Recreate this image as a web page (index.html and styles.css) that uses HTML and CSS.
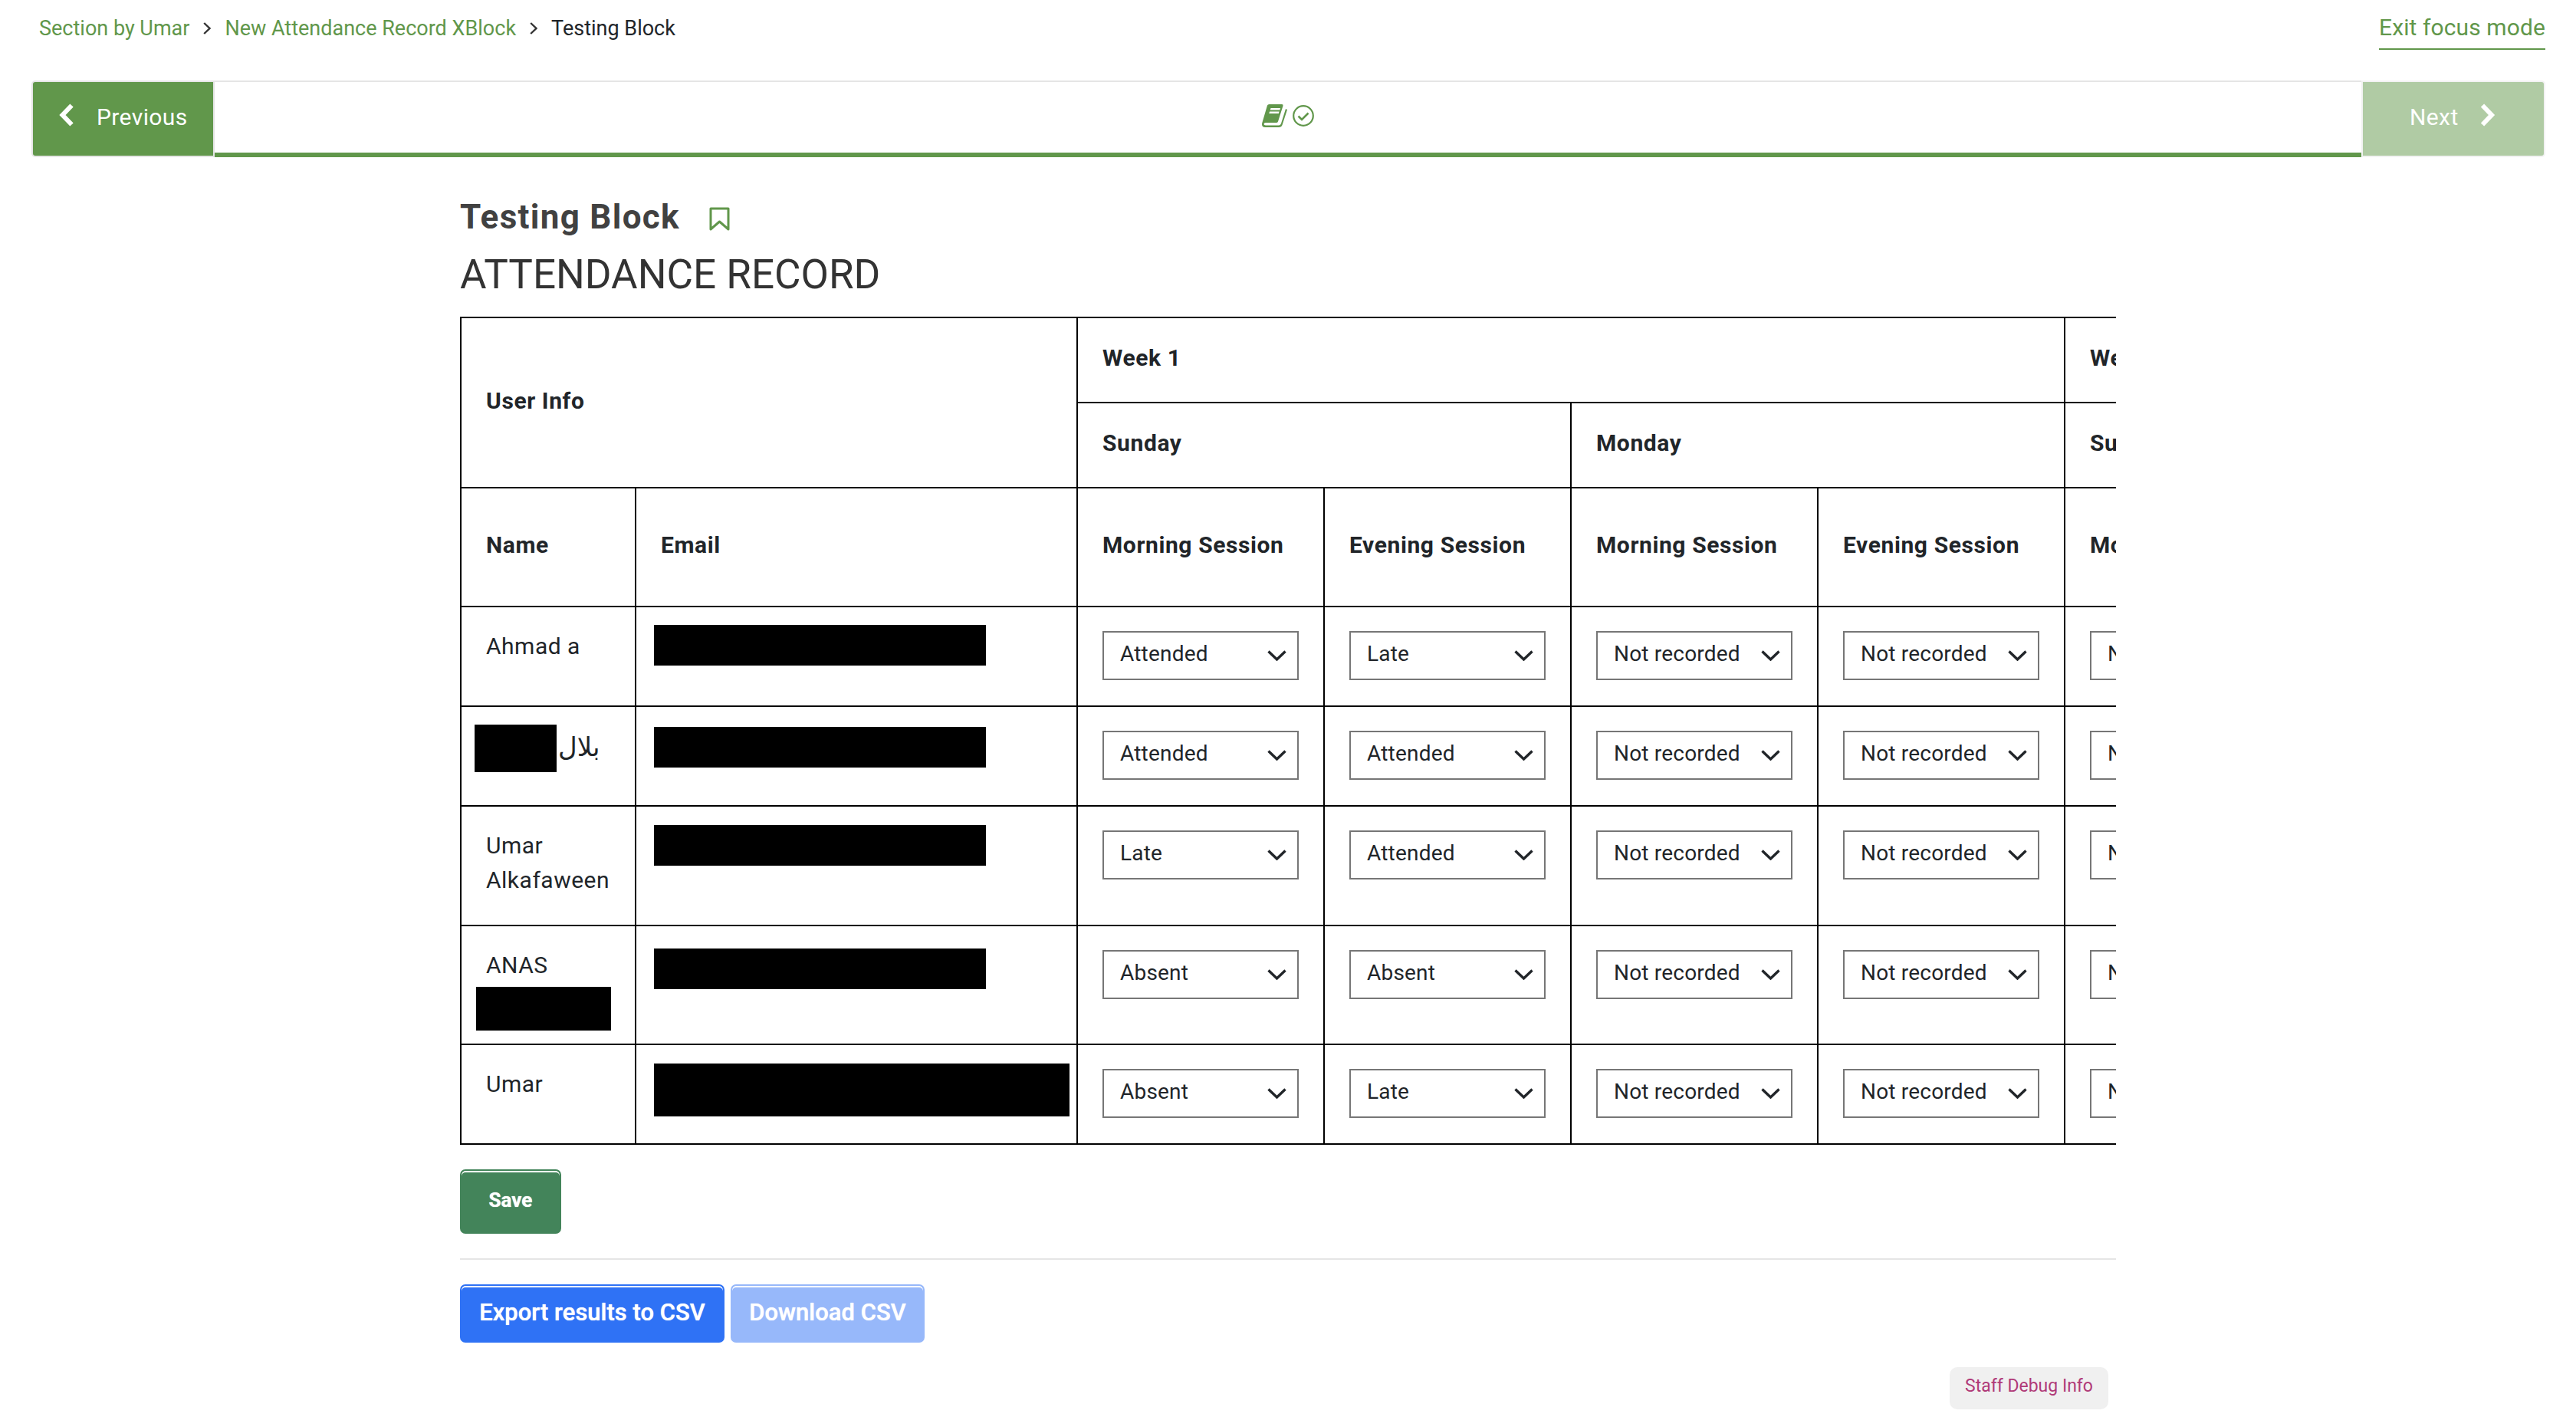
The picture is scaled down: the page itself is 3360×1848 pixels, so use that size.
FILE: index.html
```html
<!DOCTYPE html>
<html lang="en">
  <head>
    <meta charset="utf-8">
    <title>Testing Block</title>
    <link rel="stylesheet" href="styles.css">
  </head>
  <body>
    <svg class="sprite" width="0" height="0">
      <symbol id="caret" viewBox="0 0 25 14">
        <path d="M1.5 1.5 12.5 12 23.5 1.5" fill="none" stroke="#212529" stroke-width="3.4" />
      </symbol>
      <symbol id="crumb-sep" viewBox="0 0 10 16">
        <path d="M1.2 1 8.5 8 1.2 15" fill="none" stroke="#333" stroke-width="2.4" />
      </symbol>
    </svg>

    <header class="topbar">
      <nav class="crumbs">
        <a href="#">Section by Umar</a>
        <svg class="crumb-sep"><use href="#crumb-sep" /></svg>
        <a href="#">New Attendance Record XBlock</a>
        <svg class="crumb-sep"><use href="#crumb-sep" /></svg>
        <span>Testing Block</span>
      </nav>
      <a class="exit-focus" href="#">Exit focus mode</a>
    </header>

    <div class="seq-nav">
      <button class="seq-btn seq-prev">
        <svg class="seq-chevron" width="20" height="30" viewBox="0 0 20 30"><path d="M16.5 2.5 4.5 15l12 12.5" fill="none" stroke="#fff" stroke-width="6" /></svg>
        Previous
      </button>
      <div class="seq-track">
        <svg width="33" height="31" viewBox="0 0 33 31">
          <path fill="#61974b" d="M7 2.5Q7.5 1 9.5 1H26q2 0 1.5 2L21 23.5q-.5 1.5-2.5 1.5H5q-2.5 0-2.5 1.7 0 1.8 2.500 1.800h17q2 0 3-2.500L31 7l2 1-6.500 20q-1 3-4.500 3H4q-4 0-4-4 0-1 .5-2.500Z" />
          <path fill="#fff" d="M11.500 6H24l-.7 2.500H10.700ZM10 10.500h12.500l-.7 2.500H9.300Z" />
        </svg>
        <svg width="28" height="28" viewBox="0 0 28 28">
          <circle cx="14" cy="14" r="12.800" fill="none" stroke="#61974b" stroke-width="2.200" />
          <path d="M7.500 14.500 12 19l8.500-8.500" fill="none" stroke="#61974b" stroke-width="2.600" />
        </svg>
      </div>
      <button class="seq-btn seq-next">
        Next
        <svg class="seq-chevron" width="22" height="30" viewBox="0 0 22 30"><path d="M5 2.500 17 15 5 27.500" fill="none" stroke="#fff" stroke-width="6" /></svg>
      </button>
    </div>

    <main class="unit">
      <h2 class="unit-title">
        Testing Block
        <svg width="27" height="31" viewBox="0 0 27 31"><path d="M2 2h23v27L13.500 19 2 29Z" fill="none" stroke="#61974b" stroke-width="3" stroke-linejoin="round" /></svg>
      </h2>
      <h3 class="block-title">ATTENDANCE RECORD</h3>

      <div class="table-clip">
        <table class="attendance">
          <colgroup>
            <col class="col-name">
            <col class="col-email">
            <col class="col-session">
            <col class="col-session">
            <col class="col-session">
            <col class="col-session">
            <col class="col-session">
          </colgroup>
          <thead>
            <tr class="row-week">
              <th colspan="2" rowspan="2">User Info</th>
              <th colspan="4">Week 1</th>
              <th>Week 2</th>
            </tr>
            <tr class="row-day">
              <th colspan="2">Sunday</th>
              <th colspan="2">Monday</th>
              <th>Sunday</th>
            </tr>
            <tr class="row-session">
              <th>Name</th>
              <th>Email</th>
              <th>Morning Session</th>
              <th>Evening Session</th>
              <th>Morning Session</th>
              <th>Evening Session</th>
              <th>Morning Session</th>
            </tr>
          </thead>
          <tbody>
            <tr class="row-a">
              <td class="name">Ahmad a</td>
              <td class="email"><div class="mail mail-a"></div></td>
              <td><span class="picker"><select><option>Attended</option></select><svg><use href="#caret" /></svg></span></td>
              <td><span class="picker"><select><option>Late</option></select><svg><use href="#caret" /></svg></span></td>
              <td><span class="picker"><select><option>Not recorded</option></select><svg><use href="#caret" /></svg></span></td>
              <td><span class="picker"><select><option>Not recorded</option></select><svg><use href="#caret" /></svg></span></td>
              <td><span class="picker"><select><option>Not recorded</option></select><svg><use href="#caret" /></svg></span></td>
            </tr>
            <tr class="row-b">
              <td class="name"><div class="rtl-line"><div class="hide-short"></div><span class="rtl-text" dir="rtl">بلال</span></div></td>
              <td class="email"><div class="mail mail-b"></div></td>
              <td><span class="picker"><select><option>Attended</option></select><svg><use href="#caret" /></svg></span></td>
              <td><span class="picker"><select><option>Attended</option></select><svg><use href="#caret" /></svg></span></td>
              <td><span class="picker"><select><option>Not recorded</option></select><svg><use href="#caret" /></svg></span></td>
              <td><span class="picker"><select><option>Not recorded</option></select><svg><use href="#caret" /></svg></span></td>
              <td><span class="picker"><select><option>Not recorded</option></select><svg><use href="#caret" /></svg></span></td>
            </tr>
            <tr class="row-c">
              <td class="name">Umar Alkafaween</td>
              <td class="email"><div class="mail mail-c"></div></td>
              <td><span class="picker"><select><option>Late</option></select><svg><use href="#caret" /></svg></span></td>
              <td><span class="picker"><select><option>Attended</option></select><svg><use href="#caret" /></svg></span></td>
              <td><span class="picker"><select><option>Not recorded</option></select><svg><use href="#caret" /></svg></span></td>
              <td><span class="picker"><select><option>Not recorded</option></select><svg><use href="#caret" /></svg></span></td>
              <td><span class="picker"><select><option>Not recorded</option></select><svg><use href="#caret" /></svg></span></td>
            </tr>
            <tr class="row-d">
              <td class="name">ANAS<div class="hide-long"></div></td>
              <td class="email"><div class="mail mail-d"></div></td>
              <td><span class="picker"><select><option>Absent</option></select><svg><use href="#caret" /></svg></span></td>
              <td><span class="picker"><select><option>Absent</option></select><svg><use href="#caret" /></svg></span></td>
              <td><span class="picker"><select><option>Not recorded</option></select><svg><use href="#caret" /></svg></span></td>
              <td><span class="picker"><select><option>Not recorded</option></select><svg><use href="#caret" /></svg></span></td>
              <td><span class="picker"><select><option>Not recorded</option></select><svg><use href="#caret" /></svg></span></td>
            </tr>
            <tr class="row-e">
              <td class="name">Umar</td>
              <td class="email"><div class="mail mail-e"></div></td>
              <td><span class="picker"><select><option>Absent</option></select><svg><use href="#caret" /></svg></span></td>
              <td><span class="picker"><select><option>Late</option></select><svg><use href="#caret" /></svg></span></td>
              <td><span class="picker"><select><option>Not recorded</option></select><svg><use href="#caret" /></svg></span></td>
              <td><span class="picker"><select><option>Not recorded</option></select><svg><use href="#caret" /></svg></span></td>
              <td><span class="picker"><select><option>Not recorded</option></select><svg><use href="#caret" /></svg></span></td>
            </tr>
          </tbody>
        </table>
      </div>

      <button class="btn btn-save">Save</button>
      <hr class="rule">
      <div class="export-row">
        <button class="btn btn-export">Export results to CSV</button>
        <button class="btn btn-download">Download CSV</button>
      </div>
      <div class="debug-row">
        <a class="staff-debug" href="#">Staff Debug Info</a>
      </div>
    </main>
  </body>
</html>
```

FILE: styles.css
```css
* {
  box-sizing: border-box;
}
html,
body {
  margin: 0;
  height: 1848px;
  overflow: hidden;
}
body {
  background: #fff;
  color: #212529;
  font-family: Roboto, "DejaVu Sans", sans-serif;
  font-size: 28px;
}
a {
  text-decoration: none;
}
.sprite {
  display: block;
}

.topbar {
  display: flex;
  justify-content: space-between;
  align-items: flex-start;
  height: 105px;
  padding: 0 40px 0 51px;
}
.crumbs {
  display: flex;
  align-items: center;
  height: 36px;
  margin-top: 19px;
  font-size: 27px;
  line-height: 36px;
}
.crumbs a {
  color: #61974b;
}
.crumb-sep {
  width: 10px;
  height: 16px;
  margin: 0 18px;
}
.exit-focus {
  margin-top: 18px;
  height: 47px;
  line-height: 36px;
  font-size: 30px;
  letter-spacing: 0.1px;
  color: #61974b;
  border-bottom: 2px solid #61974b;
}

.seq-nav {
  display: flex;
  height: 100px;
  margin: 0 40px 0 41px;
}
.seq-btn {
  display: flex;
  align-items: center;
  height: 100px;
  padding: 0 0 6px;
  border: 2px solid #e5e5e5;
  font: 400 30px Roboto, sans-serif;
  letter-spacing: 0.4px;
  color: #fff;
}
.seq-chevron {
  margin-bottom: 4px;
}
.seq-prev {
  width: 239px;
  padding-left: 34px;
  gap: 29px;
  background: #61974b;
  border-radius: 5px 0 0 5px;
}
.seq-next {
  width: 240px;
  padding-left: 61px;
  gap: 26px;
  background: #b0cba4;
  border-color: #f2f2f2;
  border-radius: 0 5px 5px 0;
}
.seq-track {
  flex: 1;
  display: flex;
  justify-content: center;
  align-items: center;
  gap: 7px;
  padding-bottom: 5px;
  border-top: 2px solid #e5e5e5;
  border-bottom: 6px solid #61974b;
}

.unit {
  width: 2160px;
  margin-left: 600px;
}
.unit-title {
  display: flex;
  align-items: center;
  gap: 38px;
  height: 60px;
  margin: 48px 0 0;
  font-size: 44px;
  font-weight: 700;
  letter-spacing: 1.3px;
  color: #414141;
}
.unit-title svg {
  margin-top: 5px;
}
.block-title {
  height: 70px;
  margin: 10px 0 20px;
  font-size: 53px;
  font-weight: 400;
  line-height: 70px;
  color: #333;
}

.table-clip {
  overflow: hidden;
}
.attendance {
  table-layout: fixed;
  width: 2414px;
  border-collapse: collapse;
  line-height: 45px;
}
.col-name {
  width: 228px;
}
.col-email {
  width: 576px;
}
.col-session {
  width: 322px;
}
.attendance th,
.attendance td {
  border: 2px solid #000;
}
.attendance th {
  padding: 0 32px 6px;
  font-size: 30px;
  font-weight: 700;
  letter-spacing: 0.6px;
  text-align: left;
  white-space: nowrap;
}
.attendance td {
  padding: 31px 32px 0;
  vertical-align: top;
}
.row-week,
.row-day {
  height: 111px;
}
.row-session {
  height: 155px;
}
.row-a,
.row-b,
.row-e {
  height: 130px;
}
.row-c {
  height: 156px;
}
.row-d {
  height: 155px;
}

.attendance td.name {
  padding: 28px 10px 0 32px;
  font-size: 30px;
  letter-spacing: 0.5px;
}
.attendance td.email {
  padding: 0 0 0 23px;
}
.mail {
  width: 433px;
  height: 53px;
  background: #000;
}
.mail-a {
  margin-top: 23px;
}
.mail-b {
  margin-top: 26px;
}
.mail-c {
  margin-top: 24px;
}
.mail-d {
  margin-top: 29px;
}
.mail-e {
  width: 542px;
  height: 69px;
  margin-top: 24px;
}
.rtl-line {
  display: flex;
  gap: 2px;
  margin: -5px 0 0 -15px;
}
.rtl-text {
  padding-top: 7px;
  font-size: 34px;
  letter-spacing: 0;
}
.hide-short {
  width: 107px;
  height: 62px;
  background: #000;
}
.hide-long {
  width: 176px;
  height: 57px;
  margin: 6px 0 0 -13px;
  background: #000;
}

.picker {
  position: relative;
  display: block;
  width: 256px;
  height: 64px;
}
.picker select {
  appearance: none;
  display: block;
  width: 256px;
  height: 64px;
  padding: 0 50px 5px 21px;
  border: 2px solid #767676;
  border-radius: 0;
  background: #fff;
  color: #212529;
  font: 400 28px Roboto, sans-serif;
  letter-spacing: 0.2px;
}
.picker svg {
  position: absolute;
  top: 25px;
  right: 16px;
  width: 25px;
  height: 14px;
  pointer-events: none;
}

.btn {
  display: block;
  border-style: solid;
  border-width: 2px;
  border-radius: 7px;
  box-shadow: inset 0 2px 0 #fff;
  color: #fff;
  font-family: Roboto, sans-serif;
  font-weight: 700;
  padding: 0;
  text-shadow: 0 0 1px #fff;
}
.btn-save {
  width: 132px;
  height: 84px;
  margin-top: 32px;
  padding-bottom: 4px;
  background: #43845a;
  border-color: #43845a;
  font-size: 26px;
}
.rule {
  height: 2px;
  margin: 32px 0;
  border: 0;
  background: #e5e5e5;
}
.export-row {
  display: flex;
  gap: 8px;
}
.btn-export,
.btn-download {
  height: 76px;
  padding-bottom: 4px;
  font-size: 31px;
  font-weight: 500;
}
.btn-export {
  width: 345px;
  background: #2f72f5;
  border-color: #2f72f5;
}
.btn-download {
  width: 253px;
  background: #97b8fa;
  border-color: #97b8fa;
}
.debug-row {
  display: flex;
  justify-content: flex-end;
  margin-top: 32px;
  padding-right: 10px;
}
.staff-debug {
  display: block;
  width: 207px;
  height: 55px;
  padding-top: 9px;
  border-radius: 10px;
  background: #f0f0f0;
  color: #b03a78;
  font-size: 23px;
  line-height: 32px;
  text-align: center;
}
```
